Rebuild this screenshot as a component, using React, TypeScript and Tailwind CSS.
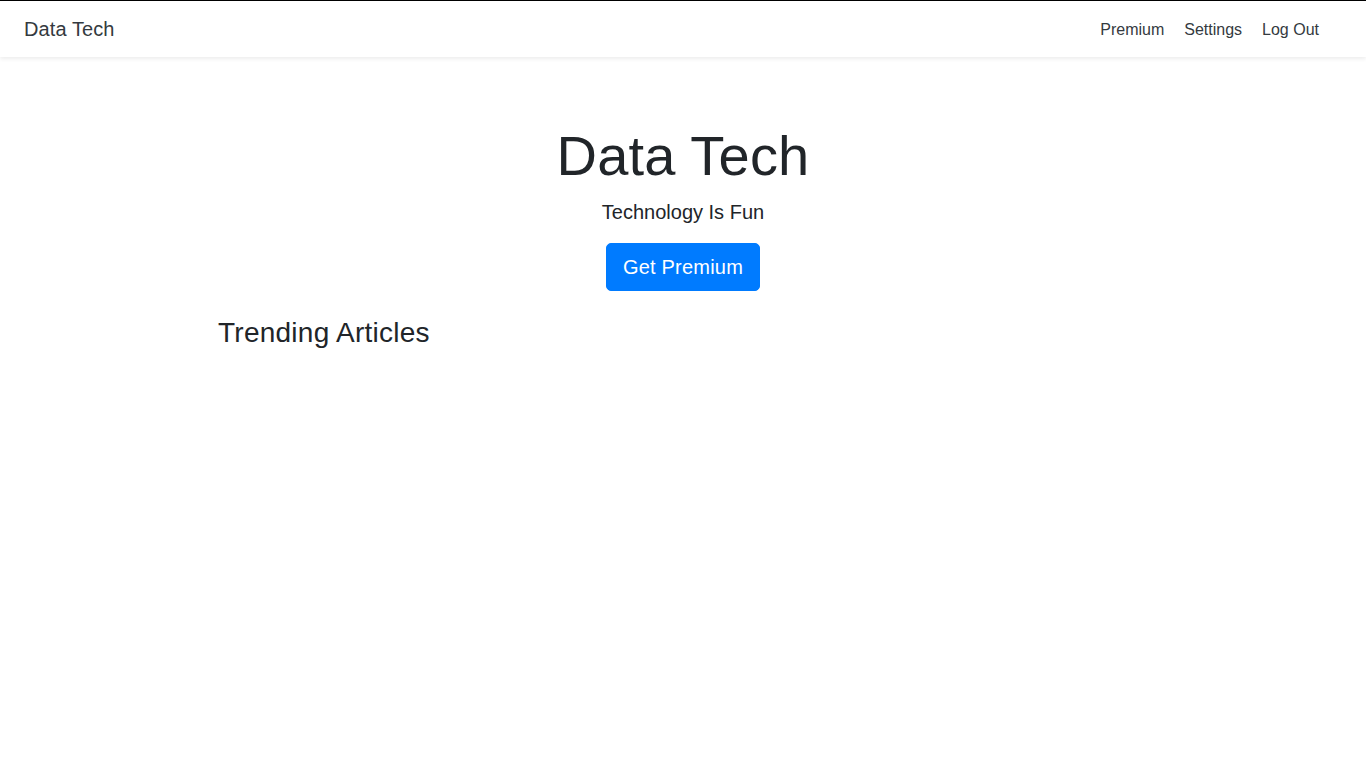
import React from 'react';

const navLinks = ['Premium', 'Settings', 'Log Out'];

export default function App() {
    return (
        <div className="min-h-screen bg-white text-[#212529] font-['Liberation_Sans',Arial,sans-serif]">
            <div className="border-t border-black">
                <nav className="h-14 flex items-center justify-between pl-6 pr-[37px] bg-white shadow-[0_2px_4px_rgba(0,0,0,0.075)]">
                    <a className="text-[20px] leading-[30px] text-[#343a40] tracking-[0.1px]">Data Tech</a>
                    <ul className="flex items-center pt-0.5">
                        {navLinks.map(link => (
                            <li key={link}>
                                <a className="block px-2 mx-0.5 py-2 text-base leading-6 text-[#343a40]">{link}</a>
                            </li>
                        ))}
                    </ul>
                </nav>
            </div>

            <div className="pt-[65px] text-center">
                <h1 className="text-[56px] leading-[1.2] font-normal tracking-[0.2px]">Data Tech</h1>
                <p className="mt-2 text-[20px] leading-[30px]">Technology Is Fun</p>
                <button className="mt-4 px-4 py-2 text-[20px] leading-[30px] text-white bg-[#007bff] rounded-[5px] border border-[#007bff] tracking-[0.2px]">
                    Get Premium
                </button>
            </div>

            <div className="w-[930px] mx-auto mt-[25px]">
                <h3 className="text-[28px] leading-[1.2] tracking-[0.25px]">Trending Articles</h3>
            </div>
        </div>
    );
}
